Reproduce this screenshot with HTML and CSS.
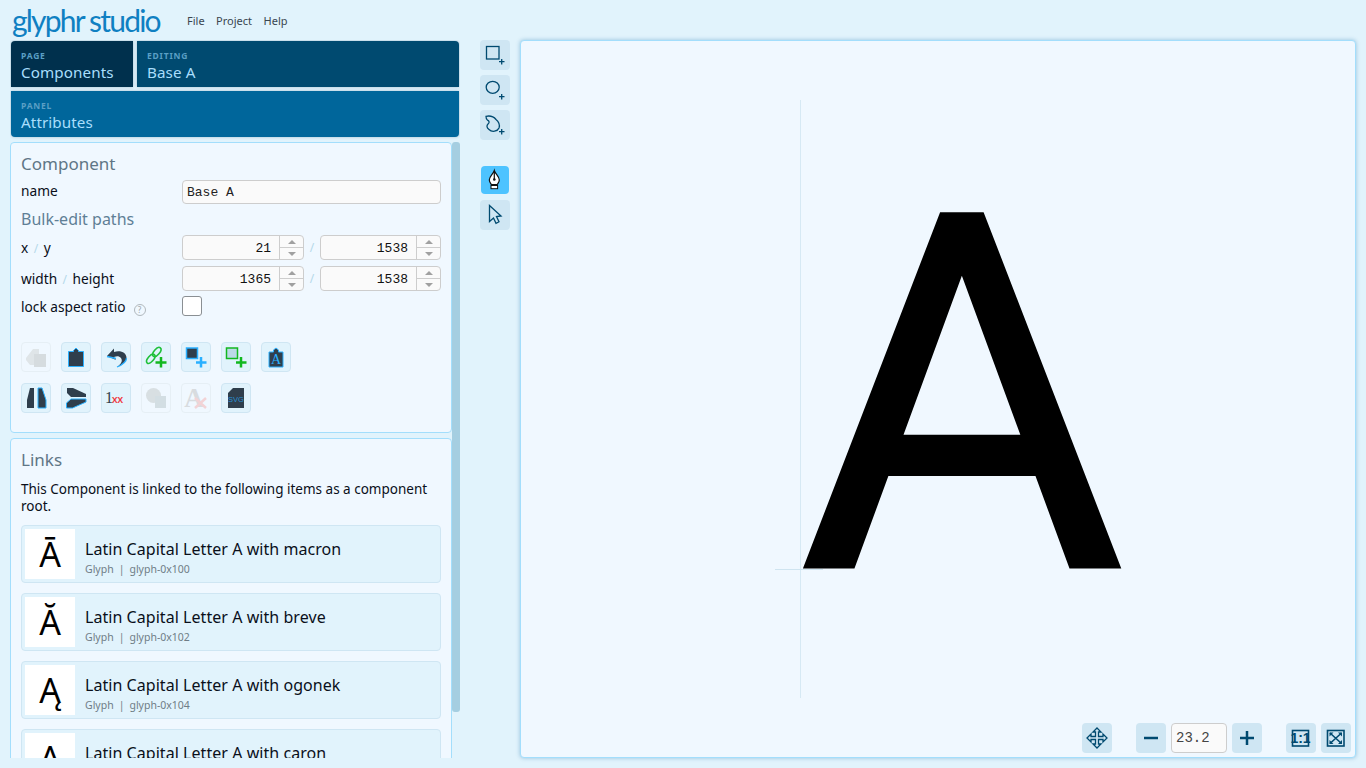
FILE: index.html
```html
<!DOCTYPE html>
<html lang="en">
<head>
<meta charset="utf-8">
<title>Glyphr Studio</title>
<link rel="stylesheet" href="styles.css">
</head>
<body>
<div class="app">
  <header class="topbar">
    <div class="logo">glyphr studio</div>
    <nav class="menu"><span>File</span><span>Project</span><span>Help</span></nav>
  </header>
  <main class="workspace">
    <section class="leftcol">
      <div class="navgrid">
        <div class="tab tab-page"><small>PAGE</small><b>Components</b></div>
        <div class="tab tab-edit"><small>EDITING</small><b>Base A</b></div>
        <div class="tab tab-panel"><small>PANEL</small><b>Attributes</b></div>
      </div>
      <div class="scroller">
        <div class="scrollthumb"></div>
        <div class="card card-attrs">
          <h2>Component</h2>
          <div class="row row-name"><label>name</label><div class="textbox">Base A</div></div>
          <h3>Bulk-edit paths</h3>
          <div class="row row-num"><label>x<i>/</i>y</label>
            <div class="num"><span>21</span><div class="spin"><em class="up"></em><em class="down"></em></div></div><i class="sep">/</i>
            <div class="num"><span>1538</span><div class="spin"><em class="up"></em><em class="down"></em></div></div>
          </div>
          <div class="row row-num row-num2"><label>width<i>/</i>height</label>
            <div class="num"><span>1365</span><div class="spin"><em class="up"></em><em class="down"></em></div></div><i class="sep">/</i>
            <div class="num"><span>1538</span><div class="spin"><em class="up"></em><em class="down"></em></div></div>
          </div>
          <div class="row row-lock"><label>lock aspect ratio<span class="help">?</span></label><div class="check"></div></div>
          <div class="actions">
            <button class="act off"><svg viewBox="0 0 30 30"><path d="M5 16 12 7h6v5h-5v11H9l-4-5z" fill="#dfe5e8"/><rect x="13" y="12" width="12" height="13" fill="#d6dcdf"/></svg></button>
            <button class="act"><svg viewBox="0 0 30 30"><path d="M7.500 9.500h5v-1l2.500-2.500 2.500 2.500v1h5v15h-15z" fill="#2f3e4c" stroke="#2ab0ff"/></svg></button>
            <button class="act"><svg viewBox="0 0 30 30"><path d="M6 14 13 6.500v3.500c7-2 12.500 1 12.500 6 0 4-4.500 7-9.500 9 4-3 6-6 4-9-2-2-4-2-7-1l2 3z" fill="#2f3e4c"/><path d="M6 14.500 15 16.500M25.500 16c0 4-4.500 7-9.500 9" fill="none" stroke="#2ab0ff" stroke-width="1.300"/></svg></button>
            <button class="act"><svg viewBox="0 0 30 30"><g fill="none" stroke="#1fc03a" stroke-width="1.600"><ellipse cx="9.800" cy="16.800" rx="5.500" ry="2.800" transform="rotate(-50 9.800 16.800)"/><ellipse cx="15.800" cy="10" rx="5.500" ry="2.800" transform="rotate(-50 15.800 10)"/></g><path d="M20 15v10.500M14.500 20.500h11" stroke="#12b81f" stroke-width="2.500"/></svg></button>
            <button class="act"><svg viewBox="0 0 30 30"><rect x="5.500" y="6" width="11" height="10.500" fill="#2f3e4c" stroke="#2ab0ff" stroke-width="1.500"/><path d="M20 15v10.500M15 20.500h10.500" stroke="#2ab0ff" stroke-width="2.500"/></svg></button>
            <button class="act"><svg viewBox="0 0 30 30"><rect x="5.500" y="6" width="11" height="10.500" fill="#bcd9e8" stroke="#12b81f" stroke-width="1.500"/><path d="M20 15v10.500M15 20.500h10.500" stroke="#12b81f" stroke-width="2.500"/></svg></button>
            <button class="act"><svg viewBox="0 0 30 30"><path d="M8 10h4.500V8l2.500-2 2.500 2v2H22v15H8z" fill="#2f3e4c" stroke="#2ab0ff"/><text x="15" y="22" class="svgtxt-a">A</text></svg></button>
            <button class="act"><svg viewBox="0 0 30 30"><path d="M9 5h4v20H6v-8z" fill="#2f3e4c"/><path d="M17 5h4l4 12v8h-8z" fill="#2f3e4c" stroke="#2ab0ff"/></svg></button>
            <button class="act"><svg viewBox="0 0 30 30"><path d="M6 5h6l13 6v3H10l-4-4z" fill="#2f3e4c"/><path d="M5.500 25h6l13.500-6v-3H10l-4.500 4z" fill="#2f3e4c" stroke="#2ab0ff"/></svg></button>
            <button class="act"><svg viewBox="0 0 30 30"><text x="4" y="20" class="svgtxt-1">1</text><text x="11" y="20" class="svgtxt-x">xx</text></svg></button>
            <button class="act off"><svg viewBox="0 0 30 30"><circle cx="12.500" cy="12.500" r="7.500" fill="#d8dfe2"/><rect x="14" y="13" width="11" height="12" fill="#d3dee3"/></svg></button>
            <button class="act off"><svg viewBox="0 0 30 30"><text x="13" y="24" class="svgtxt-da">A</text><path d="M14 15 25 25M25 15 14 25" stroke="#f2d3d6" stroke-width="2.500"/></svg></button>
            <button class="act"><svg viewBox="0 0 30 30"><path d="M12 5h11v20H7V10z" fill="#2f3e4c"/><text x="15" y="18.500" class="svgtxt-s">SVG</text></svg></button>
          </div>
        </div>
        <div class="card card-links">
          <h2>Links</h2>
          <p>This Component is linked to the following items as a component root.</p>
          <div class="link"><div class="thumb">Ā</div><div class="linktext"><strong>Latin Capital Letter A with macron</strong><span>Glyph<i>|</i>glyph-0x100</span></div></div>
          <div class="link"><div class="thumb">Ă</div><div class="linktext"><strong>Latin Capital Letter A with breve</strong><span>Glyph<i>|</i>glyph-0x102</span></div></div>
          <div class="link"><div class="thumb">Ą</div><div class="linktext"><strong>Latin Capital Letter A with ogonek</strong><span>Glyph<i>|</i>glyph-0x104</span></div></div>
          <div class="link"><div class="thumb">A</div><div class="linktext"><strong>Latin Capital Letter A with caron</strong><span>Glyph<i>|</i>glyph-0x1CD</span></div></div>
        </div>
      </div>
    </section>
    <aside class="tools">
      <button class="tool"><svg viewBox="0 0 30 30"><rect x="6.500" y="6.500" width="12.500" height="12.500" class="ln"/><path d="M19 21.700h5.500M21.700 19v5.500" class="ln"/></svg></button>
      <button class="tool"><svg viewBox="0 0 30 30"><ellipse cx="12.700" cy="12.300" rx="6.500" ry="6" class="ln"/><path d="M19 21.700h5.500M21.700 19v5.500" class="ln"/></svg></button>
      <button class="tool"><svg viewBox="0 0 30 30"><path d="M6 6.300C10 5.500 14 7 16 9.500 19 12 20 15 19 18 17.500 21.500 12 22.500 9 19.500 6.500 17.500 6.500 15.500 8 14 10 12.500 9 10.800 7.500 10.200 6.200 9.500 6 8 6 6.300z" class="ln"/><path d="M19 21.700h5.500M21.700 19v5.500" class="ln"/></svg></button>
      <button class="tool tool-on tool-gap"><svg viewBox="0 0 28 28"><path d="M13.300 4.500c1 3.500 5 6 5 9.500 0 2-1.500 3.500-2 4.500h-6c-.5-1-2-2.500-2-4.500 0-3.500 4-6 5-9.500z" fill="#fff" stroke="#111" stroke-width="1.200"/><path d="M13.300 6v7" stroke="#111" stroke-width="1.200"/><circle cx="13.300" cy="13.500" r="1.300" fill="#111"/><rect x="10" y="19.500" width="6.600" height="3.200" fill="#fff" stroke="#111"/></svg></button>
      <button class="tool"><svg viewBox="0 0 30 30"><path d="M9.500 5.500v16l4-3.500 2.500 5.300 3-1.500-2.500-5.300 4.500-.5z" class="ln"/></svg></button>
    </aside>
    <section class="canvas">
      <div class="guide-v"></div>
      <div class="guide-h"></div>
      <div class="bigglyph">A</div>
      <div class="viewbar">
        <button class="tool"><svg viewBox="0 0 30 30"><path d="M15 5l4 4h-2.500v4.500H21V11l4 4-4 4v-2.500h-4.500V21H19l-4 4-4-4h2.500v-4.500H9V19l-4-4 4-4v2.500h4.500V9H11z" class="ln"/></svg></button>
        <button class="tool bar-gap"><svg viewBox="0 0 30 30"><path d="M8 15h14" class="thick"/></svg></button>
        <div class="zoombox">23.2</div>
        <button class="tool"><svg viewBox="0 0 30 30"><path d="M8 15h14M15 8v14" class="thick"/></svg></button>
        <button class="tool bar-gap2"><svg viewBox="0 0 30 30"><rect x="6.500" y="7.500" width="16" height="15.500" class="ln2"/><text x="14.500" y="20" class="svgtxt-11">1:1</text></svg></button>
        <button class="tool"><svg viewBox="0 0 30 30"><rect x="6.500" y="7.500" width="16.500" height="15.500" class="ln2"/><path d="M9 10l11.500 10.500M20.500 10 9 20.500" class="ln2"/><path d="M8.500 9.500h4l-4 4zM21 9.500h-4l4 4zM8.500 21h4l-4-4zM21 21h-4l4-4z" fill="#004a70"/></svg></button>
      </div>
    </section>
  </main>
</div>
</body>
</html>
```
FILE: styles.css
```css
* { box-sizing: border-box; }
html, body { margin: 0; padding: 0; height: 100%; overflow: hidden; }
body { background: #e1f3fc; font-family: "Noto Sans", "Open Sans", sans-serif; color: #0a0f1a; }
.app { width: 1366px; height: 768px; overflow: hidden; }
button { padding: 0; margin: 0; border: 0; font: inherit; display: block; }
svg { display: block; width: 100%; height: 100%; }

.topbar { height: 40px; display: flex; align-items: center; }
.logo { font-family: "Lato", sans-serif; font-weight: 400; font-size: 30px; line-height: 36px; color: #0f80c2; margin-left: 12px; width: 175px; letter-spacing: -1.800px; white-space: nowrap; }
.menu { display: flex; gap: 11.500px; font-size: 11px; color: #3a4650; }
.menu span { display: block; }

.workspace { display: flex; height: 718px; }
.leftcol { width: 450px; margin-left: 10px; height: 718px; display: flex; flex-direction: column; overflow: hidden; }
.navgrid { display: grid; grid-template-columns: 122px 322px; grid-template-rows: 46px 46px; gap: 4px; margin: 1px 0 5px 1px; width: 448px; }
.tab { padding: 10px 10px 0; box-shadow: 0 0 3px rgba(0,60,100,.3); }
.tab small { display: block; font-size: 8.500px; line-height: 10px; font-weight: 700; letter-spacing: .8px; color: #5a9fc5; }
.tab b { display: block; font-weight: 400; font-size: 15.200px; line-height: 20px; margin-top: 1px; color: #a9defc; letter-spacing: .1px; }
.tab-page { background: #00304d; border-radius: 4px 0 0 0; }
.tab-edit { background: #004a70; border-radius: 0 4px 0 0; }
.tab-panel { background: #00669b; grid-column: 1 / 3; border-radius: 0 0 4px 4px; }

.scroller { position: relative; width: 450px; flex: 1; overflow: hidden; }
.scrollthumb { position: absolute; left: 442px; top: 0; width: 8px; height: 570px; background: #a5cee1; border-radius: 3px; }
.card { width: 442px; background: #f0f8ff; border: 1px solid #a3defc; border-radius: 4px; padding: 0 10px; }
.card-attrs { height: 291px; margin-bottom: 5px; }
.card h2 { margin: 0; font-weight: 400; font-size: 17px; line-height: 24px; color: #5f7686; padding-top: 9px; height: 33px; }
.card h3 { margin: 0; font-weight: 400; font-size: 16px; line-height: 22px; color: #5f7f96; height: 31px; padding-top: 4px; }
.row { display: flex; align-items: center; font-size: 13.700px; }
.row label { width: 161px; flex: none; color: #0a0f1a; }
.row label i { font-style: normal; color: #b5d8ea; margin: 0 5.500px; font-size: 12px; }
.row-name { height: 24px; margin-top: 4px; }
.row-name label { padding-bottom: 4px; }
.row-num { height: 25px; }
.row-num2 { margin-top: 6px; }
.row-lock { height: 20px; margin-top: 5px; }
.row-lock label { padding-top: 1px; }
.help { display: inline-block; width: 12px; height: 12px; border: 1px solid #b0b8bd; border-radius: 50%; font-size: 8px; line-height: 10px; text-align: center; color: #9aa4aa; margin-left: 8px; vertical-align: -1px; }
.textbox { width: 259px; height: 24px; border: 1px solid #cdcdcd; border-radius: 4px; background: #fafafa; font-family: "Liberation Mono", monospace; font-size: 13px; line-height: 23px; padding-left: 4px; color: #222; }
.num { width: 122px; height: 25px; border: 1px solid #cdcdcd; border-radius: 4px; background: #fafafa; display: flex; font-family: "Liberation Mono", monospace; font-size: 13px; line-height: 25px; color: #111; }
.num + .sep + .num { width: 121px; }
.num span { flex: 1; text-align: right; padding-right: 8px; }
.spin { width: 24px; border-left: 1px solid #cdcdcd; display: flex; flex-direction: column; }
.spin em { flex: 1; position: relative; display: flex; justify-content: center; align-items: center; }
.spin .up { border-bottom: 1px solid #cdcdcd; }
.spin .up::after { content: ""; border: 4px solid transparent; border-top: 0; border-bottom: 4px solid #a0a0a0; }
.spin .down::after { content: ""; border: 4px solid transparent; border-bottom: 0; border-top: 4px solid #a0a0a0; }
.sep { width: 16px; text-align: center; font-style: normal; color: #b5d8ea; font-size: 12px; }
.check { width: 20px; height: 20px; border: 1px solid #8a8f93; border-radius: 3px; background: #fff; }
.actions { display: grid; grid-template-columns: repeat(7, 30px); grid-auto-rows: 30px; column-gap: 10px; row-gap: 11px; margin-top: 26px; }
.act { width: 30px; height: 30px; background: #e1f3fc; border: 1px solid #cfe6f3; border-radius: 4px; }
.act svg { margin: -1px; width: 30px; height: 30px; }
.act.off { background: transparent; border-color: #e6eff5; }
.svgtxt-a { font-family: "Liberation Serif", serif; font-size: 14px; fill: #2ab0ff; text-anchor: middle; }
.svgtxt-1 { font-family: "Liberation Serif", serif; font-size: 16px; fill: #2f3e4c; }
.svgtxt-x { font-family: "Liberation Sans", sans-serif; font-size: 11px; fill: #f0282d; stroke: #f0282d; stroke-width: .2px; }
.svgtxt-da { font-family: "Liberation Serif", serif; font-weight: 700; font-size: 27px; fill: #d8dcdf; text-anchor: middle; }
.svgtxt-s { font-family: "Liberation Sans", sans-serif; font-size: 7.500px; fill: #2a8fd0; text-anchor: middle; }
.svgtxt-11 { font-family: "Liberation Sans", sans-serif; font-weight: 700; font-size: 14px; fill: #004a70; text-anchor: middle; }

.card-links { height: 340px; }
.card-links h2 { height: 42px; padding-top: 9px; }
.card-links p { margin: 0 0 10px; font-size: 13.500px; line-height: 17px; width: 412px; color: #0a0f1a; height: 34px; }
.link { height: 58px; border: 1px solid #cfe6f3; border-radius: 4px; background: #e1f3fc; display: flex; align-items: center; padding-left: 3px; margin-bottom: 10px; }
.thumb { width: 50px; height: 50px; background: #fff; font-size: 34px; line-height: 50px; text-align: center; color: #000; flex: none; }
.linktext { margin-left: 10px; padding-top: 7px; }
.linktext strong { display: block; font-weight: 400; font-size: 16px; line-height: 20px; color: #0a0f1a; letter-spacing: .05px; }
.linktext span { display: block; font-size: 10.500px; line-height: 14px; margin-top: 3px; color: #6f7d86; }
.linktext i { font-style: normal; margin: 0 5px; }

.tools { width: 30px; margin-left: 20px; display: flex; flex-direction: column; gap: 5px; }
.tool { width: 30px; height: 30px; background: #cfe6f3; border-radius: 4px; flex: none; }
.tool-on { background: #4dc3ff; width: 28px; height: 28px; margin: 1px; }
.tool-gap { margin-top: 21px; }
.ln { fill: none; stroke: #004a70; stroke-width: 1.300; }
.ln2 { fill: none; stroke: #004a70; stroke-width: 1.600; }
.thick { fill: none; stroke: #004a70; stroke-width: 2.500; }

.canvas { position: relative; width: 836px; height: 718px; margin-left: 10px; background: #f0f8ff; border: 1px solid #a3defc; border-radius: 4px; box-shadow: 0 0 4px rgba(0,100,160,.35); overflow: hidden; }
.guide-v { position: absolute; left: 279px; top: 59px; width: 1px; height: 598px; background: #d6e9f4; }
.guide-h { position: absolute; left: 254px; top: 528px; width: 48px; height: 1px; background: #cfe4f0; }
.bigglyph { position: absolute; left: 277px; top: 56px; font-family: "Roboto", sans-serif; font-size: 497px; line-height: 600px; color: #000; font-weight: 400; -webkit-text-stroke: 3px #000; transform: scaleX(1.01); transform-origin: 0 50%; }
.viewbar { position: absolute; right: 4px; bottom: 4px; display: flex; gap: 5px; }
.bar-gap { margin-left: 19px; }
.bar-gap2 { margin-left: 19px; }
.zoombox { width: 56px; height: 30px; border: 1px solid #cdcdcd; border-radius: 4px; background: #fafafa; font-family: "Liberation Mono", monospace; font-size: 14px; line-height: 28px; padding-left: 4px; color: #444; }
```
